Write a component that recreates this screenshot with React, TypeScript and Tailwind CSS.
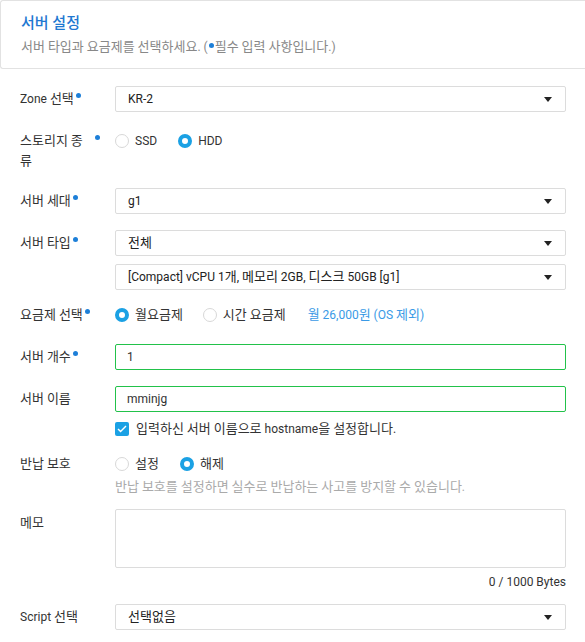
import type { ReactNode } from "react";

const font = { fontFamily: "Roboto, 'Noto Sans CJK KR', sans-serif" };

// hangul renders a touch larger than latin in the original page
function T({ children }: { children: string }) {
  const parts = children.split(/([\u1100-\u11ff\u3130-\u318f\uac00-\ud7af]+)/);
  return (
    <>
      {parts.map((part, i) =>
        i % 2 === 1 ? (
          <span key={i} className="text-[13px]">
            {part}
          </span>
        ) : (
          part
        ),
      )}
    </>
  );
}

function Label({ children, required }: { children: ReactNode; required?: boolean }) {
  return (
    <div className="w-[95px] shrink-0">
      <span className="relative inline-block max-w-[73px] leading-[20px] text-[#333]">
        {typeof children === "string" ? <T>{children}</T> : children}
        {required ? (
          <span className="absolute left-[calc(100%+2px)] top-[4px] h-[5px] w-[5px] rounded-full bg-[#1d7fd8]" />
        ) : null}
      </span>
    </div>
  );
}

function Caret() {
  return (
    <svg width="8" height="5" viewBox="0 0 8 5" className="shrink-0">
      <path d="M0 0h8L4 5z" fill="#222" />
    </svg>
  );
}

function Select({ value }: { value: string }) {
  return (
    <div className="flex h-[26px] flex-1 items-center justify-between rounded-[2px] border border-[#dcdcdc] bg-white pl-[12px] pr-[13px] text-[#222]">
      <span>
        <T>{value}</T>
      </span>
      <Caret />
    </div>
  );
}

function Input({ value }: { value: string }) {
  return (
    <div className="flex h-[26px] flex-1 items-center rounded-[2px] border border-[#22c24a] bg-white pl-[11px] text-[#333]">
      <T>{value}</T>
    </div>
  );
}

function Radio({ label, checked }: { label: string; checked?: boolean }) {
  return (
    <div className="flex items-center gap-[6px]">
      <span
        className={
          checked
            ? "h-[14px] w-[14px] rounded-full border-[4px] border-[#1ba1e4] bg-white"
            : "h-[14px] w-[14px] rounded-full border border-[#d8d8d8] bg-white"
        }
      />
      <span className="text-[#333]">
        <T>{label}</T>
      </span>
    </div>
  );
}

export default function App() {
  return (
    <div className="min-h-[642px] bg-white text-[12px]" style={font}>
      <div className="rounded-l-[3px] border border-r-0 border-[#e2e2e2] px-[20px] pb-[11px] pt-[12px]">
        <h1 className="text-[15px] font-medium leading-[20px] text-[#1f78d1]">서버 설정</h1>
        <p className="mt-[4px] leading-[20px] text-[#888]">
          <T>서버 타입과 요금제를 선택하세요. (</T>
          <span className="relative top-[-3px] mx-[1px] inline-block h-[5px] w-[5px] rounded-full bg-[#1d7fd8]" />
          <T>필수 입력 사항입니다.)</T>
        </p>
      </div>

      <div className="pl-[20px] pr-[19px]">
        <div className="mt-[17px] flex items-center">
          <Label required>Zone 선택</Label>
          <Select value="KR-2" />
        </div>

        <div className="mt-[19px] flex items-start">
          <Label required>
            <span className="inline-block w-[73px]">
              <T>스토리지 종</T>
              <br />
              <T>류</T>
            </span>
          </Label>
          <div className="flex h-[20px] items-center gap-[21px]">
            <Radio label="SSD" />
            <Radio label="HDD" checked />
          </div>
        </div>

        <div className="mt-[17px] flex items-center">
          <Label required>서버 세대</Label>
          <Select value="g1" />
        </div>

        <div className="mt-[16px] flex items-center">
          <Label required>서버 타입</Label>
          <Select value="전체" />
        </div>
        <div className="mt-[8px] flex items-center">
          <div className="w-[95px] shrink-0" />
          <Select value="[Compact] vCPU 1개, 메모리 2GB, 디스크 50GB [g1]" />
        </div>

        <div className="mt-[15px] flex items-center">
          <Label required>요금제 선택</Label>
          <div className="flex h-[20px] items-center">
            <Radio label="월요금제" checked />
            <div className="ml-[20px]">
              <Radio label="시간 요금제" />
            </div>
            <span className="ml-[22px] text-[#3a9ae6]">
              <T>월 26,000원 (OS 제외)</T>
            </span>
          </div>
        </div>

        <div className="mt-[19px] flex items-center">
          <Label required>서버 개수</Label>
          <Input value="1" />
        </div>

        <div className="mt-[16px] flex items-center">
          <Label>서버 이름</Label>
          <Input value="mminjg" />
        </div>
        <div className="mt-[7px] flex h-[20px] items-center pl-[95px]">
          <span className="flex h-[14px] w-[14px] items-center justify-center rounded-[2px] bg-[#1ba1e4]">
            <svg width="10" height="8" viewBox="0 0 10 8">
              <path d="M1 4l2.6 2.6L9 1" fill="none" stroke="#fff" strokeWidth="1.4" />
            </svg>
          </span>
          <span className="ml-[7px] text-[#333]">
            <T>입력하신 서버 이름으로 hostname을 설정합니다.</T>
          </span>
        </div>

        <div className="mt-[15px] flex items-center">
          <Label>반납 보호</Label>
          <div className="flex h-[20px] items-center gap-[21px]">
            <Radio label="설정" />
            <Radio label="해제" checked />
          </div>
        </div>
        <p className="mt-[3px] pl-[95px] leading-[20px] text-[#aaa]">
          <T>반납 보호를 설정하면 실수로 반납하는 사고를 방지할 수 있습니다.</T>
        </p>

        <div className="mt-[12px] flex items-start">
          <div className="pt-[4px]">
            <Label>메모</Label>
          </div>
          <div className="h-[59px] flex-1 rounded-[2px] border border-[#dcdcdc] bg-white" />
        </div>
        <p className="mt-[4px] text-right leading-[20px] text-[#333]">0 / 1000 Bytes</p>

        <div className="mt-[12px] flex items-center">
          <Label>Script 선택</Label>
          <Select value="선택없음" />
        </div>
      </div>
    </div>
  );
}
